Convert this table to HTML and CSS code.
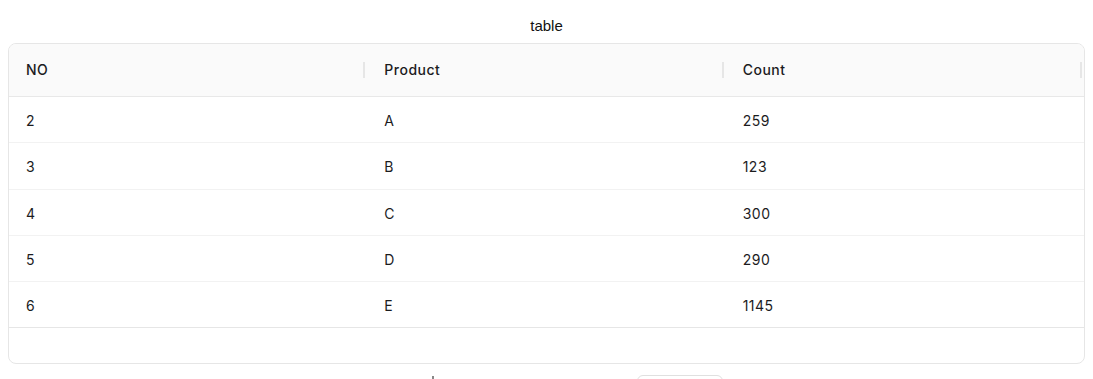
FILE: index.html
```html
<!DOCTYPE html>
<html>
<head>
<meta charset="utf-8">
<link rel="stylesheet" href="styles.css">
</head>
<body>
<div class="title">table</div>
<div class="card">
  <table class="grid">
    <thead>
      <tr><th>NO</th><th>Product</th><th>Count</th></tr>
    </thead>
    <tbody>
      <tr><td>2</td><td>A</td><td>259</td></tr>
      <tr><td>3</td><td>B</td><td>123</td></tr>
      <tr><td>4</td><td>C</td><td>300</td></tr>
      <tr><td>5</td><td>D</td><td>290</td></tr>
      <tr class="last"><td>6</td><td>E</td><td>1145</td></tr>
    </tbody>
  </table>
  <div class="foot"></div>
</div>
<div class="pager">
  <span class="mark"></span>
  <span class="box"></span>
</div>
</body>
</html>
```
FILE: styles.css
```css
html, body { margin: 0; padding: 0; background: #fff; }
body { margin: 8px; font-family: Inter, "Noto Sans", sans-serif; overflow: hidden; }
.title {
  height: 35px;
  line-height: 36px;
  text-align: center;
  font-family: "Liberation Sans", Arial, sans-serif;
  font-size: 15px;
  color: #111;
}
.card {
  border: 1px solid #e6e6e6;
  border-radius: 8px;
  overflow: hidden;
}
.grid {
  width: 100%;
  border-collapse: collapse;
  table-layout: fixed;
  font-size: 14px;
  letter-spacing: 0.5px;
  color: #1c1c1e;
}
.grid th {
  position: relative;
  text-align: left;
  font-weight: 500;
  background: #fafafa;
  height: 52px;
  padding: 0 17px;
  border-bottom: 1px solid #e8e8e8;
  line-height: 22px;
}
.grid th::before {
  content: "";
  position: absolute;
  right: 2px;
  top: 50%;
  width: 2px;
  height: 16px;
  margin-top: -8px;
  background: #e6e6e6;
}
.grid td {
  padding: 13px 17px 11px;
  line-height: 21.25px;
  border-bottom: 1px solid #f2f2f2;
}
.grid tr.last td { border-bottom: 1px solid #e6e6e6; }
.foot { height: 35px; }
.pager {
  display: flex;
  align-items: flex-start;
  margin-top: 11px;
  height: 20px;
}
.mark {
  width: 2px;
  height: 6px;
  margin-left: 424px;
  margin-top: 1px;
  background: #888;
}
.box {
  width: 84px;
  height: 24px;
  margin-left: 203px;
  border: 1px solid #e0e0e0;
  border-radius: 6px;
}
```
